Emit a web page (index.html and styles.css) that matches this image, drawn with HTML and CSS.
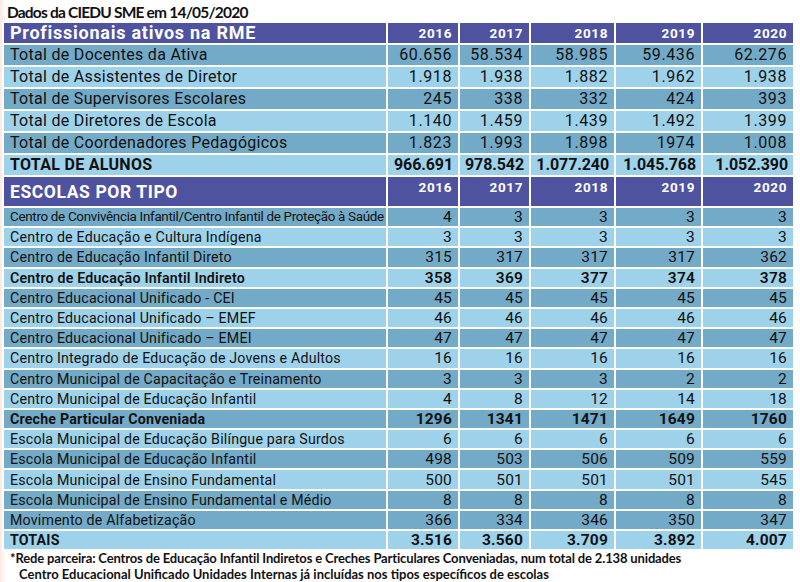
FILE: index.html
```html
<!DOCTYPE html>
<html lang="pt-BR">
<head>
<meta charset="utf-8">
<title>Dados da CIEDU SME</title>
<link rel="stylesheet" href="styles.css">
</head>
<body>
<div class="page">
  <div class="title">Dados da CIEDU SME em 14/05/2020</div>
  <table class="data">
    <colgroup>
      <col class="c-label"><col class="c16"><col class="c17"><col class="c18"><col class="c19"><col class="c20">
    </colgroup>
    <tr class="head head1">
      <th class="sec">Profissionais ativos na RME</th>
      <th>2016</th><th>2017</th><th>2018</th><th>2019</th><th>2020</th>
    </tr>
    <tr class="r1 dark"><td>Total de Docentes da Ativa</td><td>60.656</td><td>58.534</td><td>58.985</td><td>59.436</td><td>62.276</td></tr>
    <tr class="r1 light"><td>Total de Assistentes de Diretor</td><td>1.918</td><td>1.938</td><td>1.882</td><td>1.962</td><td>1.938</td></tr>
    <tr class="r1 dark"><td>Total de Supervisores Escolares</td><td>245</td><td>338</td><td>332</td><td>424</td><td>393</td></tr>
    <tr class="r1 light"><td>Total de Diretores de Escola</td><td>1.140</td><td>1.459</td><td>1.439</td><td>1.492</td><td>1.399</td></tr>
    <tr class="r1 dark"><td>Total de Coordenadores Pedagógicos</td><td>1.823</td><td>1.993</td><td>1.898</td><td>1974</td><td>1.008</td></tr>
    <tr class="r1 light strong"><td>TOTAL DE ALUNOS</td><td>966.691</td><td>978.542</td><td>1.077.240</td><td>1.045.768</td><td>1.052.390</td></tr>
    <tr class="head head2">
      <th class="sec">ESCOLAS POR TIPO</th>
      <th>2016</th><th>2017</th><th>2018</th><th>2019</th><th>2020</th>
    </tr>
    <tr class="r2 dark"><td class="tight">Centro de Convivência Infantil/Centro Infantil de Proteção à Saúde</td><td>4</td><td>3</td><td>3</td><td>3</td><td>3</td></tr>
    <tr class="r2 light"><td>Centro de Educação e Cultura Indígena</td><td>3</td><td>3</td><td>3</td><td>3</td><td>3</td></tr>
    <tr class="r2 dark"><td>Centro de Educação Infantil Direto</td><td>315</td><td>317</td><td>317</td><td>317</td><td>362</td></tr>
    <tr class="r2 light semi"><td>Centro de Educação Infantil Indireto</td><td>358</td><td>369</td><td>377</td><td>374</td><td>378</td></tr>
    <tr class="r2 dark"><td>Centro Educacional Unificado - CEI</td><td>45</td><td>45</td><td>45</td><td>45</td><td>45</td></tr>
    <tr class="r2 light"><td>Centro Educacional Unificado – EMEF</td><td>46</td><td>46</td><td>46</td><td>46</td><td>46</td></tr>
    <tr class="r2 dark"><td>Centro Educacional Unificado – EMEI</td><td>47</td><td>47</td><td>47</td><td>47</td><td>47</td></tr>
    <tr class="r2 light"><td>Centro Integrado de Educação de Jovens e Adultos</td><td>16</td><td>16</td><td>16</td><td>16</td><td>16</td></tr>
    <tr class="r2 dark"><td>Centro Municipal de Capacitação e Treinamento</td><td>3</td><td>3</td><td>3</td><td>2</td><td>2</td></tr>
    <tr class="r2 light"><td>Centro Municipal de Educação Infantil</td><td>4</td><td>8</td><td>12</td><td>14</td><td>18</td></tr>
    <tr class="r2 dark strong"><td>Creche Particular Conveniada</td><td>1296</td><td>1341</td><td>1471</td><td>1649</td><td>1760</td></tr>
    <tr class="r2 light"><td>Escola Municipal de Educação Bilíngue para Surdos</td><td>6</td><td>6</td><td>6</td><td>6</td><td>6</td></tr>
    <tr class="r2 dark"><td>Escola Municipal de Educação Infantil</td><td>498</td><td>503</td><td>506</td><td>509</td><td>559</td></tr>
    <tr class="r2 light"><td>Escola Municipal de Ensino Fundamental</td><td>500</td><td>501</td><td>501</td><td>501</td><td>545</td></tr>
    <tr class="r2 dark"><td>Escola Municipal de Ensino Fundamental e Médio</td><td>8</td><td>8</td><td>8</td><td>8</td><td>8</td></tr>
    <tr class="r2 dark"><td>Movimento de Alfabetização</td><td>366</td><td>334</td><td>346</td><td>350</td><td>347</td></tr>
    <tr class="r2 light strong"><td>TOTAIS</td><td>3.516</td><td>3.560</td><td>3.709</td><td>3.892</td><td>4.007</td></tr>
  </table>
  <div class="notes">
    <p>*Rede parceira: Centros de Educação Infantil Indiretos e Creches Particulares Conveniadas, num total de 2.138 unidades</p>
    <p class="indent">Centro Educacional Unificado Unidades Internas já incluídas nos tipos específicos de escolas</p>
  </div>
</div>
</body>
</html>
```

FILE: styles.css
```css
html, body {
  margin: 0;
  padding: 0;
  background: #ffffff;
}

.page {
  width: 800px;
  height: 582px;
  overflow: hidden;
  background: linear-gradient(90deg, #fbe9e2 0, #fdf3ef 3px, #ffffff 6px);
  color: #111;
}

.title {
  font-family: "Lato", "Open Sans", sans-serif;
  font-weight: 700;
  font-size: 15.5px;
  line-height: 16px;
  padding: 4px 0 0 7px;
  height: 17px;
  letter-spacing: -0.8px;
}

.data {
  margin-left: 2px;
  width: 793px;
  border-collapse: separate;
  border-spacing: 2px;
  table-layout: fixed;
  font-family: "Roboto", "DejaVu Sans", sans-serif;
  background: #ffffff;
}

.c-label { width: 382px; }
.c16 { width: 70px; }
.c17 { width: 69px; }
.c18 { width: 83px; }
.c19 { width: 85px; }
.c20 { width: 90px; }

.data th,
.data td {
  padding: 0 6px;
  text-align: right;
  white-space: nowrap;
  overflow: hidden;
}

.data th:first-child,
.data td:first-child {
  text-align: left;
  padding-left: 6px;
}

.head th {
  background: #4f529e;
  color: #ffffff;
  font-weight: 700;
  font-size: 13.5px;
  letter-spacing: 0.6px;
  vertical-align: top;
}

.head1 th { height: 20px; line-height: 20px; }
.head2 th { height: 28px; line-height: 18px; padding-top: 1px; }

.head th.sec {
  font-size: 18px;
  letter-spacing: 0.75px;
  vertical-align: middle;
}

.head1 th.sec { line-height: 20px; }
.head2 th.sec { line-height: 28px; padding-top: 0; font-size: 17.5px; letter-spacing: 0.6px; }

.dark td { background: #72aac7; }
.light td { background: #9dd2ea; }

.r1 td {
  height: 20px;
  line-height: 20px;
  font-size: 16px;
  letter-spacing: 0.3px;
}

.r1 td:not(:first-child) {
  letter-spacing: 0.6px;
}

.r1.strong td:not(:first-child) {
  letter-spacing: -0.1px;
  padding-right: 5px;
  padding-left: 0;
}

.r2 td {
  height: 18.2px;
  line-height: 18px;
  font-size: 14.2px;
  letter-spacing: 0.2px;
}

.r2 td:not(:first-child) {
  font-size: 15.5px;
}

.r2 td.tight {
  font-size: 13.4px;
  letter-spacing: -0.3px;
}

.strong td { font-weight: 700; }
.semi td { font-weight: 600; }

.notes {
  font-family: "Lato", "Open Sans", sans-serif;
  font-weight: 700;
  font-size: 13px;
  line-height: 16px;
  padding: 0 0 0 10px;
  margin-top: -1px;
}

.notes p {
  margin: 0;
  letter-spacing: -0.15px;
}

.notes p.indent {
  padding-left: 9px;
  letter-spacing: 0;
}
```
